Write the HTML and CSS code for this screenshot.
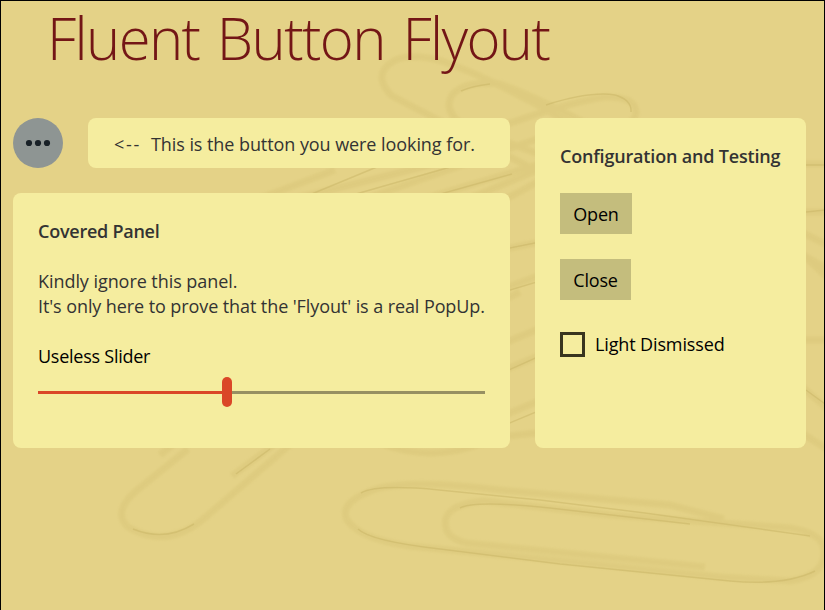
FILE: index.html
```html
<!DOCTYPE html>
<html lang="en">
<head>
<meta charset="utf-8">
<title>Fluent Button Flyout</title>
<link rel="stylesheet" href="styles.css">
</head>
<body>
<div class="window">
  <svg class="backdrop" viewBox="0 0 825 610" aria-hidden="true">
    <g class="wire">
      <path d="M535 170L392 96Q374 78 388 65Q403 51 442 61Q490 78 550 112L720 210L830 270"/>
      <path d="M620 184L466 127Q442 112 452 95Q464 80 500 84Q560 106 640 155L830 246"/>
      <path d="M486 132Q560 104 604 97Q636 96 636 113Q632 132 590 148L250 290"/>
      <path d="M188 449L136 491Q112 512 128 527Q165 549 201 521L400 350L520 292"/>
      <path d="M160 455L420 245L545 178"/>
      <path d="M232 476L300 425L430 330"/>
      <path d="M240 206L335 170M350 204L540 138M400 206L560 158M290 200L470 155M500 250L560 238M500 290L560 268M500 345L560 320M500 372L560 347M500 417L560 392M500 437L560 430"/>
      <path d="M380 443Q431 463 482 443"/>
      <path d="M724 519L670 505L500 490Q410 479 376 489Q338 502 347 520Q360 539 409 546L563 561L720 577L790 581Q827 575 824 549Q822 533 790 528L610 515L484 501Q440 505 446 528Q448 538 466 543L705 567"/>
      <path d="M800 164H830M800 212H830M800 252L830 280M800 340H830M800 385L830 411M800 432L830 451"/>
    </g>
    <g class="shade">
      <path d="M461 91Q472 86 490 84M546 105Q590 91 615 95Q632 100 631 112"/>
      <path d="M133 529Q165 542 194 524M236 474L270 449M361 493Q377 484 439 490L540 500L645 513L810 536M460 508Q475 500 550 508L690 524M358 529Q370 541 440 549L560 564L730 581Q785 586 815 571"/>
      <path d="M302 198L430 145M335 200L510 150M405 204L512 174M500 250L560 238M500 293L560 275M500 374L560 347M500 427L560 402M800 165H825M806 212L825 210M806 390L825 404"/>
    </g>
  </svg>
  <h1 class="title">Fluent Button Flyout</h1>
  <main class="layout">
    <button class="more" aria-label="More">
      <svg width="50" height="50" viewBox="0 0 50 50"><circle cx="16" cy="25" r="3.1"/><circle cx="25" cy="25" r="3.1"/><circle cx="34" cy="25" r="3.1"/></svg>
    </button>
    <p class="card hint"><span class="arrow">&lt;--</span><span class="hint-text">This is the button you were looking for.</span></p>
    <section class="card config">
      <h2 class="heading config-heading">Configuration and Testing</h2>
      <button class="button open">Open</button>
      <button class="button close">Close</button>
      <label class="check"><span class="box"></span><span class="check-text">Light Dismissed</span></label>
    </section>
    <section class="card covered">
      <h2 class="heading covered-heading">Covered Panel</h2>
      <p class="copy"><span class="line-one">Kindly ignore this panel.</span><br><span class="line-two">It's only here to prove that the 'Flyout' is a real PopUp.</span></p>
      <p class="label">Useless Slider</p>
      <div class="slider"><div class="fill"></div><div class="thumb"></div><div class="rest"></div></div>
    </section>
  </main>
</div>
</body>
</html>
```

FILE: styles.css
```css
* { box-sizing: border-box; margin: 0; padding: 0; }
body { width: 825px; height: 610px; overflow: hidden; }
.window {
  position: relative;
  height: 610px;
  padding: 0 12px;
  border: 1px solid #000;
  border-bottom: 0;
  background: #e4d287;
  color: #333;
  font: 18px/25px "Open Sans", "Noto Sans", sans-serif;
  white-space: nowrap;
}
.backdrop { position: absolute; left: -1px; top: -1px; width: 825px; height: 610px; clip-path: inset(1px 1px 0 1px); }
.wire { fill: none; stroke: #dbc87b; stroke-width: 7; opacity: .6; filter: blur(.8px); }
.shade { fill: none; stroke: #c9b566; stroke-width: 1.5; opacity: .5; filter: blur(.6px); }
.title {
  position: relative;
  height: 117px;
  padding-left: 34px;
  color: #731616;
  font-size: 58px;
  font-weight: 300;
  line-height: 73px;
  letter-spacing: -1.6px;
  word-spacing: 4px;
}
.layout {
  position: relative;
  display: grid;
  grid-template-columns: 50px 422px 271px;
  grid-template-rows: 50px 255px;
  gap: 25px;
}
.card { border-radius: 8px; background: #f5ed9f; }
.more { width: 50px; height: 50px; border: 0; border-radius: 50%; background: #8e9593; }
.more svg { display: block; fill: #182127; }
.hint { display: flex; gap: 10px; padding: 14px 26px 11px; }
.arrow { width: 27px; letter-spacing: 1.7px; }
.config { grid-column: 3; grid-row: 1 / 3; display: flex; flex-direction: column; align-items: flex-start; gap: 25px; padding: 26px 25px 24px; }
.covered { grid-column: 1 / 3; grid-row: 2; padding: 26px 25px 24px; }
.heading { font-size: 18px; font-weight: 600; line-height: 25px; }
.config-heading { margin-bottom: -1px; letter-spacing: -.18px; }
.covered-heading { letter-spacing: -.25px; }
.copy { margin: 25px 0; }
.line-one { letter-spacing: -.06px; }
.line-two { letter-spacing: -.09px; }
.hint-text { letter-spacing: -.07px; }
.label { color: #000; letter-spacing: -.25px; }
.button { height: 41px; padding-top: 2px; border: 0; background: #c4bd7d; color: #000; font: inherit; letter-spacing: -.2px; text-align: center; }
.open { width: 72px; }
.close { width: 71px; }
.check { display: flex; gap: 10px; margin-top: 7px; color: #000; }
.check-text { letter-spacing: -.13px; }
.box { width: 25px; height: 25px; border: 3px solid #38351f; }
.slider { display: flex; align-items: center; height: 30px; margin-top: 8px; }
.fill { width: 184px; height: 3px; background: #da4727; }
.thumb { width: 10px; height: 30px; border-radius: 5px; background: #da4727; }
.rest { flex: 1; height: 3px; background: #979062; }
```
